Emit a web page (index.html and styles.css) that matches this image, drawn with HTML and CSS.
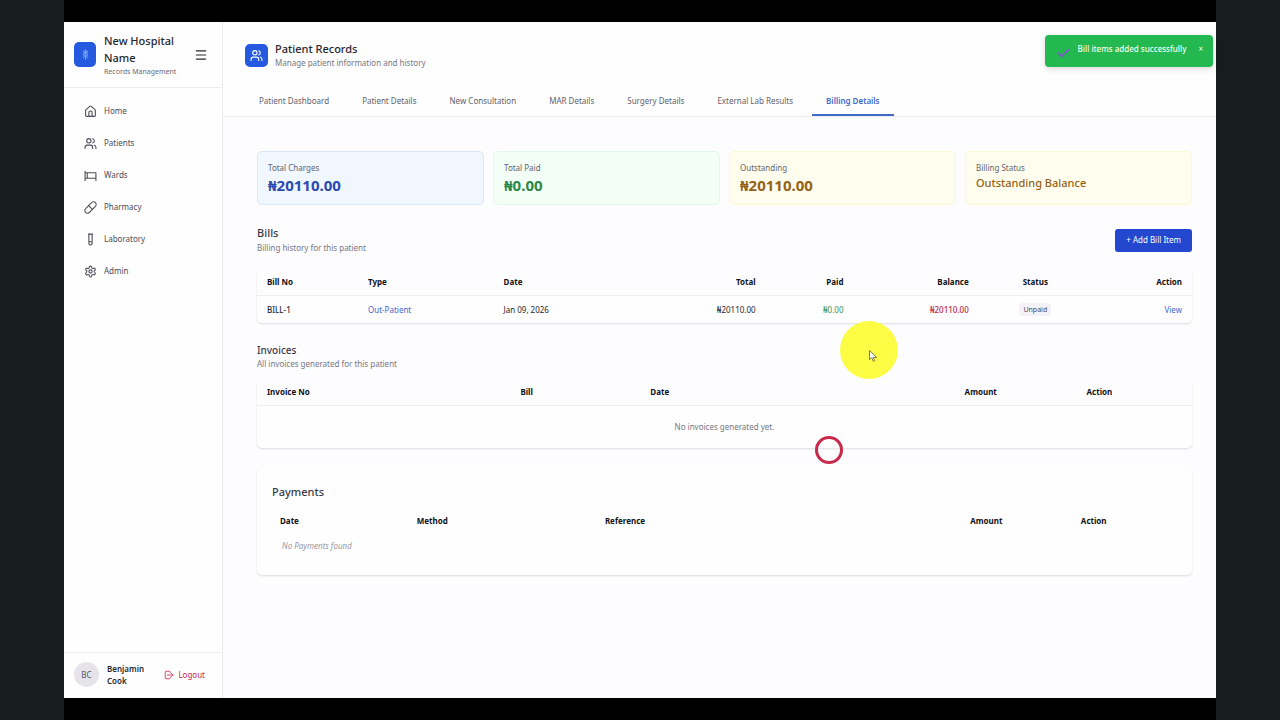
FILE: index.html
```html
<!DOCTYPE html>
<html lang="en">
<head>
    <meta charset="UTF-8">
    <meta name="viewport" content="width=device-width, initial-scale=1.0">
    <title>Patient Records - Billing Details</title>
    <link rel="stylesheet" href="styles.css">
</head>
<body>
    <div class="stage">
        <div class="app">
            <aside class="sidebar">
                <div class="brand">
                    <span class="brand-logo">
                        <svg viewBox="0 0 24 24" width="13" height="13"><path d="M12 3v18M8 6c0 3 8 3 8 6s-8 3-8 6M16 6c0 3-8 3-8 6s8 3 8 6M8 6h8"/></svg>
                    </span>
                    <div class="brand-text">
                        <h2>New Hospital Name</h2>
                        <p>Records Management</p>
                    </div>
                    <button class="menu-btn" aria-label="Toggle menu">
                        <svg viewBox="0 0 24 24" width="14" height="14"><path d="M4 5h16M4 12h16M4 19h16"/></svg>
                    </button>
                </div>
                <nav class="side-nav">
                    <a href="#home">
                        <svg viewBox="0 0 24 24"><path d="M15 21v-7a3 3 0 0 0-6 0v7"/><path d="M3 10a2 2 0 0 1 .7-1.5l7-6a2 2 0 0 1 2.6 0l7 6A2 2 0 0 1 21 10v9a2 2 0 0 1-2 2H5a2 2 0 0 1-2-2z"/></svg>
                        Home
                    </a>
                    <a href="#patients">
                        <svg viewBox="0 0 24 24"><path d="M16 21v-2a4 4 0 0 0-4-4H6a4 4 0 0 0-4 4v2"/><circle cx="9" cy="7" r="4"/><path d="M22 21v-2a4 4 0 0 0-3-3.9M16 3.1a4 4 0 0 1 0 7.8"/></svg>
                        Patients
                    </a>
                    <a href="#wards">
                        <svg viewBox="0 0 24 24"><path d="M2 4v17M2 17h20M22 21V7H6v10M2 7h4"/></svg>
                        Wards
                    </a>
                    <a href="#pharmacy">
                        <svg viewBox="0 0 24 24"><path d="m10.5 20.5 10-10a5 5 0 1 0-7-7l-10 10a5 5 0 1 0 7 7Z"/><path d="m8.5 8.5 7 7"/></svg>
                        Pharmacy
                    </a>
                    <a href="#laboratory">
                        <svg viewBox="0 0 24 24"><path d="M8 2h8M9 2v17a3 3 0 0 0 6 0V2M9 16h6"/></svg>
                        Laboratory
                    </a>
                    <a href="#admin">
                        <svg viewBox="0 0 24 24"><path d="M12.2 2h-.4a2 2 0 0 0-2 2v.2a2 2 0 0 1-1 1.700l-.4.3a2 2 0 0 1-2 0l-.2-.1a2 2 0 0 0-2.7.7l-.2.4a2 2 0 0 0 .7 2.7l.2.1a2 2 0 0 1 1 1.7v.5a2 2 0 0 1-1 1.8l-.2.1a2 2 0 0 0-.7 2.7l.2.4a2 2 0 0 0 2.7.7l.2-.1a2 2 0 0 1 2 0l.4.3a2 2 0 0 1 1 1.7v.2a2 2 0 0 0 2 2h.4a2 2 0 0 0 2-2v-.2a2 2 0 0 1 1-1.7l.4-.3a2 2 0 0 1 2 0l.2.1a2 2 0 0 0 2.7-.7l.2-.4a2 2 0 0 0-.7-2.7l-.2-.1a2 2 0 0 1-1-1.8v-.5a2 2 0 0 1 1-1.7l.2-.1a2 2 0 0 0 .7-2.7l-.2-.4a2 2 0 0 0-2.7-.7l-.2.1a2 2 0 0 1-2 0l-.4-.3a2 2 0 0 1-1-1.7V4a2 2 0 0 0-2-2z"/><circle cx="12" cy="12" r="3"/></svg>
                        Admin
                    </a>
                </nav>
                <div class="user">
                    <span class="avatar">BC</span>
                    <strong>Benjamin Cook</strong>
                    <button class="logout">
                        <svg viewBox="0 0 24 24" width="10" height="10"><path d="M15 7V5a2 2 0 0 0-2-2H5a2 2 0 0 0-2 2v14a2 2 0 0 0 2 2h8a2 2 0 0 0 2-2v-2M8 12h13M18 8l4 4-4 4"/></svg>
                        Logout
                    </button>
                </div>
            </aside>

            <main class="main">
                <header class="page-header">
                    <div class="page-title">
                        <span class="title-icon">
                            <svg viewBox="0 0 24 24" width="13" height="13"><path d="M16 21v-2a4 4 0 0 0-4-4H6a4 4 0 0 0-4 4v2"/><circle cx="9" cy="7" r="4"/><path d="M22 21v-2a4 4 0 0 0-3-3.9M16 3.1a4 4 0 0 1 0 7.8"/></svg>
                        </span>
                        <div>
                            <h1>Patient Records</h1>
                            <p>Manage patient information and history</p>
                        </div>
                    </div>
                    <nav class="tabs">
                        <a href="#dashboard">Patient Dashboard</a>
                        <a href="#details">Patient Details</a>
                        <a href="#consultation">New Consultation</a>
                        <a href="#mar">MAR Details</a>
                        <a href="#surgery">Surgery Details</a>
                        <a href="#lab">External Lab Results</a>
                        <a href="#billing" class="active">Billing Details</a>
                    </nav>
                </header>

                <div class="content">
                    <div class="stats">
                        <div class="stat blue">
                            <p>Total Charges</p>
                            <strong>₦20110.00</strong>
                        </div>
                        <div class="stat green">
                            <p>Total Paid</p>
                            <strong>₦0.00</strong>
                        </div>
                        <div class="stat yellow">
                            <p>Outstanding</p>
                            <strong>₦20110.00</strong>
                        </div>
                        <div class="stat yellow">
                            <p>Billing Status</p>
                            <strong class="status-text">Outstanding Balance</strong>
                        </div>
                    </div>

                    <section>
                        <div class="section-head bills-head">
                            <div>
                                <h3>Bills</h3>
                                <p>Billing history for this patient</p>
                            </div>
                            <button class="add-btn">+ Add Bill Item</button>
                        </div>
                        <table class="panel bills">
                            <thead>
                                <tr>
                                    <th class="bill-no">Bill No</th>
                                    <th class="bill-type">Type</th>
                                    <th class="bill-date">Date</th>
                                    <th class="bill-total right">Total</th>
                                    <th class="bill-paid right">Paid</th>
                                    <th class="bill-balance right">Balance</th>
                                    <th class="bill-status center">Status</th>
                                    <th class="right">Action</th>
                                </tr>
                            </thead>
                            <tbody>
                                <tr>
                                    <td class="medium">BILL-1</td>
                                    <td class="type">Out-Patient</td>
                                    <td>Jan 09, 2026</td>
                                    <td class="right">₦20110.00</td>
                                    <td class="right paid">₦0.00</td>
                                    <td class="right balance">₦20110.00</td>
                                    <td class="center"><span class="pill">Unpaid</span></td>
                                    <td class="right"><a href="#bill-1">View</a></td>
                                </tr>
                            </tbody>
                        </table>
                    </section>

                    <section>
                        <div class="section-head">
                            <div>
                                <h4>Invoices</h4>
                                <p>All invoices generated for this patient</p>
                            </div>
                        </div>
                        <table class="panel invoices">
                            <thead>
                                <tr>
                                    <th class="inv-no">Invoice No</th>
                                    <th class="inv-bill">Bill</th>
                                    <th class="inv-date">Date</th>
                                    <th class="inv-amount right">Amount</th>
                                    <th class="center">Action</th>
                                </tr>
                            </thead>
                            <tbody>
                                <tr>
                                    <td colspan="5" class="empty">No invoices generated yet.</td>
                                </tr>
                            </tbody>
                        </table>
                    </section>

                    <section class="panel payments">
                        <h3>Payments</h3>
                        <table>
                            <thead>
                                <tr>
                                    <th class="pay-date">Date</th>
                                    <th class="pay-method">Method</th>
                                    <th class="pay-ref">Reference</th>
                                    <th class="pay-amount right">Amount</th>
                                    <th class="center">Action</th>
                                </tr>
                            </thead>
                            <tbody>
                                <tr>
                                    <td colspan="5" class="none">No Payments found</td>
                                </tr>
                            </tbody>
                        </table>
                    </section>
                </div>
            </main>

            <div class="toast" role="status">
                <svg viewBox="0 0 24 24" width="13" height="13"><path d="M3 14l6 5L21 7"/></svg>
                <span>Bill items added successfully</span>
                <button aria-label="Close">×</button>
            </div>
        </div>
    </div>

    <div class="pointer">
        <svg viewBox="0 0 12 16" width="9" height="12"><path d="M2 1v12l3-3 2 5 2-1-2-4h4z"/></svg>
    </div>
    <div class="click-ring"></div>
</body>
</html>
```

FILE: styles.css
```css
* {
    box-sizing: border-box;
}
body {
    margin: 0;
    background-color: #171c1f;
    font-family: "Noto Sans", "Open Sans", sans-serif;
    font-size: 8px;
    line-height: 14px;
    color: #27272f;
}
h1, h2, h3, h4, p {
    margin: 0;
}
a {
    color: inherit;
    text-decoration: none;
}
button {
    border: none;
    padding: 0;
    background: none;
    font: inherit;
    color: inherit;
    cursor: pointer;
}
svg {
    flex-shrink: 0;
    fill: none;
    stroke: currentColor;
    stroke-width: 2;
    stroke-linecap: round;
    stroke-linejoin: round;
}
.stage {
    margin: 0 5%;
    padding: 22px 0;
    background-color: #000;
}
.app {
    position: relative;
    display: flex;
    min-height: calc(100vh - 44px);
    background-color: #fdfcfe;
}

/* sidebar */
.sidebar {
    display: flex;
    flex-direction: column;
    width: 159px;
    flex-shrink: 0;
    background-color: #fefefe;
    border-right: 1px solid #ececf0;
}
.brand {
    display: flex;
    align-items: center;
    gap: 8px;
    padding: 10px 14px 10px 10px;
    border-bottom: 1px solid #ececf0;
}
.brand-logo {
    display: grid;
    place-items: center;
    width: 22px;
    height: 25px;
    border-radius: 5px;
    background-color: #2459e0;
    color: #6f9bf2;
    flex-shrink: 0;
}
.brand-text {
    flex: 1;
}
.brand h2 {
    font-size: 11px;
    line-height: 17px;
    font-weight: 500;
}
.brand p {
    font-size: 7px;
    line-height: 11px;
    color: #6b6b75;
    white-space: nowrap;
}
.menu-btn {
    display: grid;
}
.side-nav {
    display: flex;
    flex-direction: column;
    gap: 4px;
    padding: 9px 10px;
    flex: 1;
}
.side-nav a {
    display: flex;
    align-items: center;
    gap: 7px;
    height: 28px;
    padding: 0 10px;
    color: #4c4c57;
}
.side-nav svg {
    width: 13px;
    height: 13px;
}
.user {
    display: flex;
    align-items: center;
    gap: 8px;
    padding: 9px 17px 11px 10px;
    border-top: 1px solid #ececf0;
}
.user strong {
    flex: 1;
    font-weight: 600;
    line-height: 12px;
}
.avatar {
    display: grid;
    place-items: center;
    width: 25px;
    height: 25px;
    border-radius: 50%;
    background-color: #e6e4ea;
    color: #55555f;
}
.logout {
    display: flex;
    align-items: center;
    gap: 4px;
    color: #c52a50;
}

/* page header */
.main {
    flex: 1;
    min-width: 0;
}
.page-header {
    padding: 19px 22px 0;
    background-color: #fefefe;
    border-bottom: 1px solid #ececf0;
}
.page-title {
    display: flex;
    align-items: center;
    gap: 7px;
    margin-bottom: 17px;
}
.title-icon {
    display: grid;
    place-items: center;
    width: 23px;
    height: 23px;
    border-radius: 5px;
    background-color: #2459e0;
    color: #fff;
}
.page-title h1 {
    font-size: 11px;
    line-height: 15px;
    font-weight: 500;
}
.page-title p {
    color: #777782;
}
.tabs {
    display: flex;
    gap: 5px;
}
.tabs a {
    padding: 7px 14px 6px;
    border-bottom: 2px solid transparent;
    color: #62626d;
}
.tabs .active {
    border-color: #4069c5;
    color: #4169d0;
    font-weight: 600;
}

/* billing content */
.content {
    display: flex;
    flex-direction: column;
    gap: 20px;
    padding: 34px 24px 20px 34px;
}
.stats {
    display: grid;
    grid-template-columns: repeat(4, 1fr);
    gap: 9px;
}
.stat {
    min-height: 54px;
    padding: 9px 10px;
    border: 1px solid;
    border-radius: 5px;
}
.stat p {
    color: #62626d;
}
.stat strong {
    display: block;
    font-size: 15px;
    line-height: 20px;
}
.stat .status-text {
    font-size: 11px;
    line-height: 16px;
    font-weight: 500;
}
.blue {
    background-color: #f1f7ff;
    border-color: #dbe6f6;
    color: #2c49b0;
}
.green {
    background-color: #f3fff6;
    border-color: #e3f8ea;
    color: #2b8746;
}
.yellow {
    background-color: #fffeee;
    border-color: #fcf8d2;
    color: #946214;
}
.section-head {
    display: flex;
    align-items: center;
    justify-content: space-between;
    margin-bottom: 7px;
}
.bills-head {
    margin-bottom: 13px;
}
.section-head p {
    color: #777782;
}
h3 {
    font-size: 11px;
    line-height: 16px;
    font-weight: 500;
    color: #3a3a46;
}
h4 {
    font-size: 10px;
    line-height: 14px;
    font-weight: 500;
    color: #3a3a46;
}
.add-btn {
    height: 23px;
    padding: 0 11px;
    border-radius: 3px;
    background-color: #2348cf;
    color: #fff;
}
table {
    width: 100%;
    table-layout: fixed;
    border-spacing: 0;
}
th, td {
    padding: 7px 10px 6px;
    text-align: left;
}
td {
    padding: 6px 10px;
}
th {
    font-weight: 700;
    color: #111116;
}
.panel {
    border-radius: 5px;
    background-color: #fefefe;
    box-shadow: 0 1px 2px rgba(30, 20, 50, 0.14);
}
.bills thead, .invoices thead {
    background-color: #fdfcfe;
}
.panel.bills th, .panel.invoices th {
    border-bottom: 1px solid #efedf2;
}
th.right, td.right {
    text-align: right;
}
th.center, td.center {
    text-align: center;
}
.bill-no { width: 10.8%; }
.bill-type { width: 14.5%; }
.bill-date { width: 15.6%; }
.bill-total { width: 13.5%; }
.bill-paid { width: 9.4%; }
.bill-balance { width: 13.4%; }
.bill-status { width: 12.1%; }
.inv-no { width: 27.1%; }
.inv-bill { width: 13.9%; }
.inv-date { width: 23.5%; }
.inv-amount { width: 15.7%; }
.pay-date { width: 15.1%; }
.pay-method { width: 20.8%; }
.pay-ref { width: 24%; }
.pay-amount { width: 21.7%; }
.medium {
    font-weight: 500;
}
.type, td a {
    color: #4468cc;
}
.paid {
    color: #35935a;
}
.balance {
    color: #c4203f;
    font-weight: 500;
}
.pill {
    padding: 2px 4px;
    border-radius: 3px;
    background-color: #f4f2f6;
    font-size: 7px;
    color: #4c4c57;
}
td.empty {
    padding: 14px 10px;
    text-align: center;
    color: #777782;
}
.payments {
    padding: 16px 15px 18px;
}
.payments h3 {
    margin-bottom: 7px;
}
.payments th, .payments td {
    padding: 7px 8px;
}
.payments td.none {
    padding: 4px 10px;
    font-style: italic;
    color: #9a9aa3;
}

/* toast and pointer lie over the page */
.toast {
    position: absolute;
    top: 13px;
    right: 3px;
    display: flex;
    align-items: center;
    gap: 8px;
    height: 32px;
    padding: 0 10px 4px 12px;
    border-radius: 4px;
    background-color: #24b850;
    box-shadow: 0 2px 6px rgba(0, 0, 0, 0.15);
    color: #effff2;
}
.toast svg {
    margin-top: 7px;
    color: #6d69b0;
    stroke-width: 4;
}
.toast span {
    font-weight: 500;
}
.toast button {
    margin-left: 4px;
}
.pointer {
    position: absolute;
    top: 321px;
    left: 840px;
    display: grid;
    place-items: center;
    width: 58px;
    height: 58px;
    padding: 12px 0 0 6px;
    border-radius: 50%;
    background-color: #fcfc45;
    color: #55552c;
}
.pointer path {
    fill: #fff;
    stroke-width: 1;
}
.click-ring {
    position: absolute;
    top: 436px;
    left: 815px;
    width: 28px;
    height: 28px;
    border: 3px solid #c72a4a;
    border-radius: 50%;
}
```
